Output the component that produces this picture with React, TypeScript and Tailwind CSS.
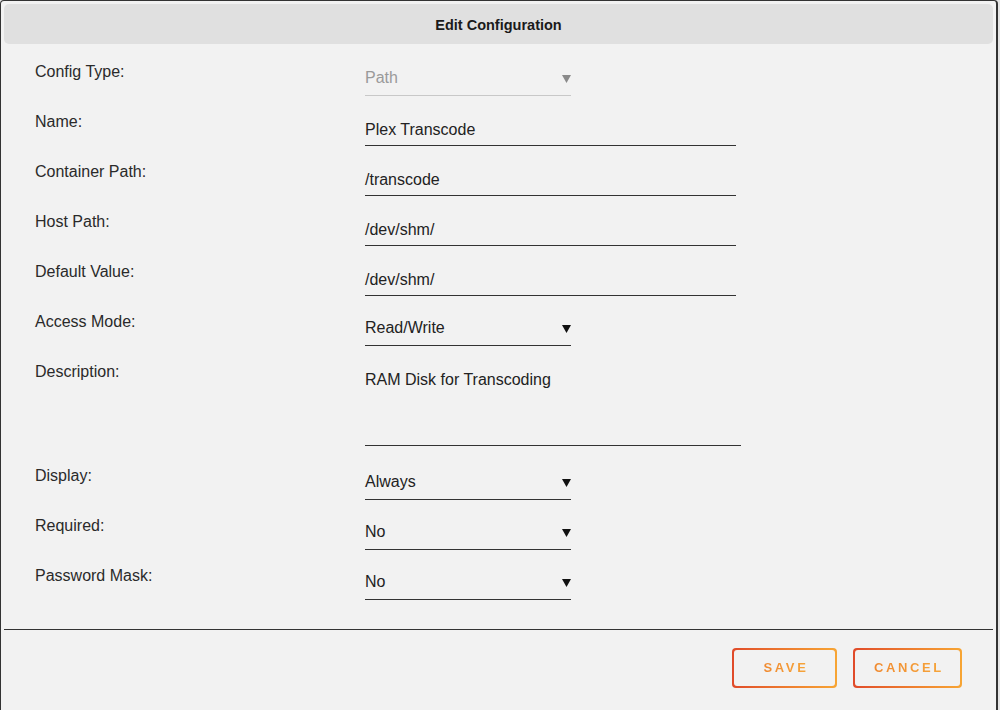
import React from 'react';

type Row = {
  label: string;
  value: string;
  kind: 'text' | 'select' | 'area';
  disabled?: boolean;
};

const rows: Row[] = [
  { label: 'Config Type:', value: 'Path', kind: 'select', disabled: true },
  { label: 'Name:', value: 'Plex Transcode', kind: 'text' },
  { label: 'Container Path:', value: '/transcode', kind: 'text' },
  { label: 'Host Path:', value: '/dev/shm/', kind: 'text' },
  { label: 'Default Value:', value: '/dev/shm/', kind: 'text' },
  { label: 'Access Mode:', value: 'Read/Write', kind: 'select' },
  { label: 'Description:', value: 'RAM Disk for Transcoding', kind: 'area' },
  { label: 'Display:', value: 'Always', kind: 'select' },
  { label: 'Required:', value: 'No', kind: 'select' },
  { label: 'Password Mask:', value: 'No', kind: 'select' },
];

function Arrow({ disabled }: { disabled?: boolean }) {
  return (
    <svg width="9" height="8" viewBox="0 0 9 8" className="mt-[2px]">
      <path d="M0 0h9L4.5 8z" fill={disabled ? '#8a8a8a' : '#111'} />
    </svg>
  );
}

function Field({ row }: { row: Row }) {
  if (row.kind === 'select') {
    return (
      <div
        className={`flex h-[36px] w-[206px] items-start justify-between border-b pt-[8px] ${
          row.disabled ? 'border-[#c8c8c8] text-[#9a9a9a]' : 'border-[#333] text-[#222]'
        }`}
      >
        <span className="leading-[20px]">{row.value}</span>
        <span className="flex h-[20px] items-center">
          <Arrow disabled={row.disabled} />
        </span>
      </div>
    );
  }
  if (row.kind === 'area') {
    return (
      <div className="h-[86px] w-[376px] border-b border-[#333] pt-[8px] text-[#222]">
        <span className="leading-[20px]">{row.value}</span>
      </div>
    );
  }
  return (
    <div className="h-[36px] w-[371px] border-b border-[#333] pt-[8px] text-[#222]">
      <span className="leading-[20px]">{row.value}</span>
    </div>
  );
}

function GradientButton({ label, width }: { label: string; width: string }) {
  return (
    <div className={`rounded-[4px] bg-gradient-to-r from-[#e04a2a] to-[#f7a534] p-[2px] ${width}`}>
      <div className="flex h-[36px] items-center justify-center rounded-[3px] bg-[#f2f2f2] pl-[3px]">
        <span className="bg-gradient-to-r from-[#f08a30] to-[#f6a53a] bg-clip-text text-[13px] font-bold tracking-[2.6px] text-transparent">
          {label}
        </span>
      </div>
    </div>
  );
}

export default function App() {
  return (
    <div
      className="h-[710px] w-[1000px] overflow-hidden bg-[#e4e4e4] text-[16px]"
      style={{ fontFamily: '"Liberation Sans", Arial, sans-serif' }}
    >
      <div className="h-[730px] w-[998px] rounded-[4px] border-l border-t border-r-2 border-[#333] bg-[#f2f2f2] px-[3px] pt-[3px]">
        <div className="flex h-[40px] items-center justify-center rounded-[5px] bg-[#e0e0e0] pt-[3px] text-[14.5px] font-bold text-[#1a1a1a]">
          Edit Configuration
        </div>

        <div className="pt-[16px]">
          {rows.map((row) => (
            <div
              key={row.label}
              className={`flex items-start ${row.kind === 'area' ? 'h-[104px]' : 'h-[50px]'}`}
            >
              <div className="w-[361px] pl-[31px] pt-[2px] leading-[20px] text-[#2a2a2a]">{row.label}</div>
              <Field row={row} />
            </div>
          ))}
        </div>

        <div className="mt-[15px] h-px bg-[#333]" />

        <div className="flex justify-end gap-[16px] pr-[31px] pt-[18px]">
          <GradientButton label="SAVE" width="w-[105px]" />
          <GradientButton label="CANCEL" width="w-[109px]" />
        </div>
      </div>
    </div>
  );
}
